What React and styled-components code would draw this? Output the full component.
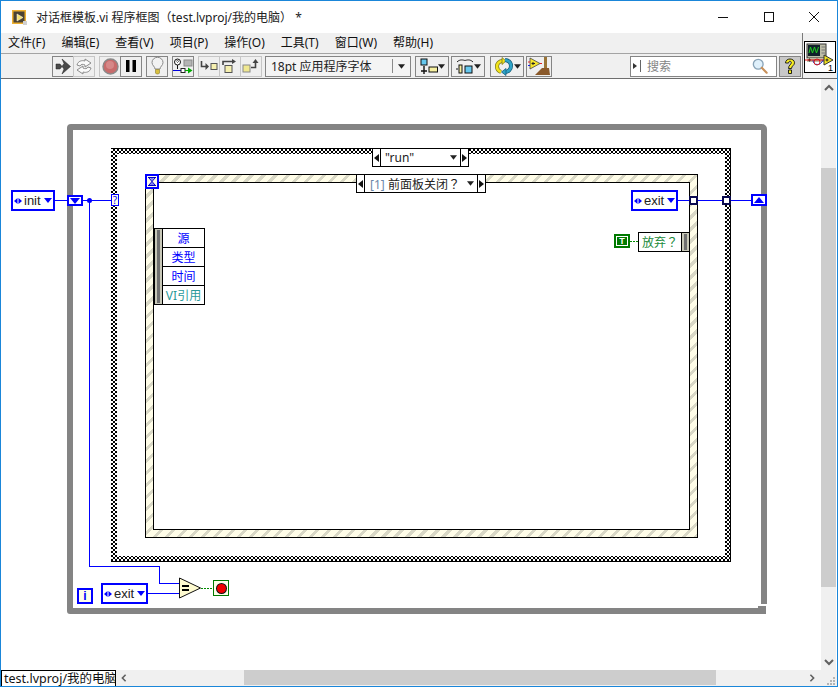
import React from "react";
import styled, { createGlobalStyle, css } from "styled-components";

const UI_FONT = `"Noto Sans", "Noto Sans CJK SC", sans-serif`;
const BLUE = "#0000ff";
const GREEN = "#007a00";

// diagram nodes sit on a free canvas, coordinates are the ones of the window
const place = (x, y, w, h) => css`
  position: absolute;
  left: ${x - 1}px;
  top: ${y - 79}px;
  width: ${w}px;
  height: ${h}px;
  box-sizing: border-box;
`;

const Global = createGlobalStyle`
  html, body { margin: 0; padding: 0; background: #fff; }
  body { font-family: ${UI_FONT}; overflow: hidden; }
`;

const AppWindow = styled.div`
  width: 838px;
  height: 687px;
  box-sizing: border-box;
  border: 1px solid #1a86d9;
  display: flex;
  flex-direction: column;
  background: #fff;
`;

const TitleBar = styled.div`
  height: 32px;
  flex: none;
  display: flex;
  align-items: center;
  padding-left: 11px;
`;

const TitleText = styled.div`
  margin-left: 9px;
  font-size: 12px;
  color: #222;
  flex: 1;
  white-space: pre;
`;

const WinButtons = styled.div`
  display: flex;
`;

const WinButton = styled.div`
  width: 45.5px;
  height: 32px;
  display: flex;
  align-items: center;
  justify-content: center;
`;

const Header = styled.div`
  display: flex;
  height: 45px;
  flex: none;
  background: #f0f0f0;
  border-bottom: 1px solid #6e6e6e;
`;

const HeaderMain = styled.div`
  flex: 1;
  display: flex;
  flex-direction: column;
`;

const MenuBar = styled.div`
  height: 17px;
  padding: 0 0 3px 7px;
  display: flex;
  align-items: center;
  gap: 16px;
  font-size: 12px;
  color: #111;
  border-bottom: 1px solid #a4a4a4;
`;

const MenuItem = styled.span`
  white-space: nowrap;
`;

const Toolbar = styled.div`
  flex: 1;
  display: flex;
  align-items: center;
  padding-left: 51px;
  padding-right: 1px;
`;

const ToolGroup = styled.div`
  display: flex;
  flex: none;
  margin-right: ${(p) => p.$gap ?? 4}px;
`;

const ToolButton = styled.div`
  width: ${(p) => p.$w ?? 22}px;
  height: 21px;
  flex: none;
  box-sizing: border-box;
  border: 1.5px solid ${(p) => (p.$soft ? "#c6c6c6" : "#858585")};
  background: #efefef;
  display: flex;
  align-items: center;
  justify-content: center;
  margin-left: ${(p) => (p.$join ? -1 : 0)}px;
`;

const FontPicker = styled.div`
  width: 146px;
  height: 21px;
  flex: none;
  box-sizing: border-box;
  border: 1.5px solid #858585;
  background: #f4f4f4;
  display: flex;
  align-items: center;
  font-size: 12px;
  color: #222;
  padding-left: 5px;
  margin-right: 4px;
`;

const FontName = styled.span`
  flex: 1;
  white-space: pre;
`;

const FontArrow = styled.span`
  width: 17px;
  height: 14px;
  border-left: 1px solid #8a8a8a;
  display: flex;
  align-items: center;
  justify-content: center;
`;

const Search = styled.div`
  width: 147px;
  height: 21px;
  box-sizing: border-box;
  border: 1.5px solid #858585;
  background: #fff;
  margin-left: auto;
  margin-right: 2px;
  padding-right: 8px;
  display: flex;
  align-items: center;
  font-size: 12px;
  color: #858585;
`;

const SearchMark = styled.span`
  width: 7px;
  height: 12px;
  margin-left: 2px;
  margin-right: 6px;
  border-right: 1px solid #666;
  display: flex;
  align-items: center;
`;

const SearchLabel = styled.span`
  flex: 1;
`;

const HelpButton = styled.div`
  width: 22px;
  height: 21px;
  box-sizing: border-box;
  border: 1.5px solid #858585;
  background: #c8c8c8;
  display: flex;
  align-items: center;
  justify-content: center;
`;

const IconPane = styled.div`
  width: 35px;
  border-left: 1px solid #7a7a7a;
  display: flex;
  align-items: center;
  justify-content: center;
  box-sizing: border-box;
`;

const ViIcon = styled.div`
  width: 32px;
  height: 32px;
  box-sizing: border-box;
  border: 1px solid #000;
  background: #fff;
  margin-top: 2px;
`;

const Body = styled.div`
  flex: 1;
  display: flex;
  min-height: 0;
`;

const Diagram = styled.div`
  flex: 1;
  position: relative;
  overflow: hidden;
  background: #fff;
`;

const VScroll = styled.div`
  width: 15px;
  margin-right: 1px;
  background: #f0f0f0;
  display: flex;
  flex-direction: column;
  align-items: center;
`;

const VThumb = styled.div`
  width: 15px;
  height: 419px;
  margin-top: 72px;
  flex: none;
  background: #cdcdcd;
`;

const ScrollArrow = styled.div`
  display: flex;
  align-items: center;
  justify-content: center;
  height: 17px;
  flex: none;
`;

const VDown = styled(ScrollArrow)`
  margin-top: auto;
`;

const BottomRow = styled.div`
  height: 16px;
  flex: none;
  display: flex;
  background: #f0f0f0;
`;

const PathLabel = styled.div`
  width: 115px;
  box-sizing: border-box;
  border: 1px solid #000;
  border-bottom: none;
  background: #fff;
  font-size: 12.5px;
  line-height: 15px;
  color: #111;
  padding-left: 2px;
  white-space: nowrap;
  overflow: hidden;
`;

const HScroll = styled.div`
  flex: 1;
  display: flex;
  align-items: center;
`;

const HThumb = styled.div`
  width: 472px;
  height: 15px;
  margin-left: 116px;
  background: #cdcdcd;
  align-self: flex-start;
`;

const HArrowLeft = styled.div`
  margin-left: 4px;
  width: 8px;
  display: flex;
`;

const HArrowRight = styled.div`
  margin-left: 92px;
  width: 8px;
  display: flex;
`;

const Grip = styled.div`
  margin-left: auto;
  margin-right: 1px;
  width: 15px;
  height: 15px;
  display: flex;
  align-items: flex-end;
  justify-content: flex-end;
`;

/* diagram parts */

const WhileLoop = styled.div`
  ${place(67, 124, 700, 490)}
  border: 6px solid #848484;
  border-radius: 4px 5px 0 3px;
`;

const LoopKnot = styled.div`
  ${place(758, 604, 10, 11)}
  background: #fff;
  &::after {
    content: "";
    position: absolute;
    left: 0;
    top: 2px;
    width: 8px;
    height: 8px;
    background: #848484;
  }
`;

const CaseStructure = styled.div`
  ${place(111, 148, 620, 414)}
  border: 1px solid #000;
  border-left: none;
  padding: 5px 5px 5px 6px;
  background: conic-gradient(#000 25%, #fff 0 50%, #000 0 75%, #fff 0) 0 0 / 4px 4px;
`;

const CaseInner = styled.div`
  height: 100%;
  background: #fff;
`;

const EventStructure = styled.div`
  ${place(145, 174, 553, 364)}
  border: 1px solid #000;
  padding: 7px;
  background: repeating-linear-gradient(
    135deg,
    #fffde8 0 5.5px,
    #d9d8c6 5.5px 8.5px
  );
`;

const EventInner = styled.div`
  height: 100%;
  box-sizing: border-box;
  background: #fff;
  border: 1px solid #000;
`;

const Wires = styled.svg`
  position: absolute;
  left: -1px;
  top: -79px;
  width: 838px;
  height: 687px;
  pointer-events: none;
`;

const SelectorBox = styled.div`
  ${(p) => place(p.$x, p.$y, p.$w, 19)}
  border: 1px solid #000;
  background: #fff;
  display: flex;
  align-items: center;
  font-size: 12px;
  color: #222;
  white-space: pre;
`;

const SelectorStep = styled.span`
  width: 7px;
  height: 100%;
  flex: none;
  background: #fff;
  border-${(p) => (p.$right ? "left" : "right")}: 1px solid #000;
  display: flex;
  align-items: center;
  justify-content: center;
`;

const SelectorText = styled.span`
  flex: 1;
  padding-left: ${(p) => p.$pad}px;
`;

const SelectorIndex = styled.span`
  color: #6c87a8;
`;

const SelectorDrop = styled.span`
  display: flex;
  margin-right: 3px;
`;

// the question mark sits in the middle of its cell in the reference
const WidePunct = styled.span`
  font-family: "Noto Sans CJK TC", sans-serif;
`;

const EnumBox = styled.div`
  ${(p) => place(p.$x, p.$y, p.$w, p.$h)}
  border: 2px solid ${BLUE};
  outline: 0.5px solid ${BLUE};
  outline-offset: -1px;
  background: #fff;
  display: flex;
  align-items: center;
  padding: 0 1px 0 1px;
  font-family: "Liberation Sans", sans-serif;
  font-size: 13px;
  color: #222;
  svg {
    flex: none;
  }
`;

const EnumLabel = styled.span`
  flex: 1;
  margin-left: 2px;
  line-height: 14px;
`;

const ShiftRegister = styled.div`
  ${(p) => place(p.$x, p.$y, 16, p.$h)}
  border: 2px solid ${BLUE};
  background: #fff;
  display: flex;
  align-items: center;
  justify-content: center;
`;

const SelectorTerminal = styled.div`
  ${place(111, 194, 8, 12)}
  border: 1px solid ${BLUE};
  background: #fffde8;
  color: ${BLUE};
  font-size: 10px;
  line-height: 10px;
  text-align: center;
`;

const Hourglass = styled.div`
  ${place(145, 174, 14, 15)}
  border: 2px solid ${BLUE};
  background: #fffde8;
  display: flex;
  align-items: center;
  justify-content: center;
`;

const Tunnel = styled.div`
  ${(p) => place(p.$x, 196, 9, 9)}
  border: 2px solid #0a0a50;
  background: #fff;
`;

const Unbundle = styled.div`
  ${place(154, 228, 51, 77)}
  border: 1px solid #000;
  display: flex;
  background: #fff;
`;

const Handle = styled.div`
  width: 7px;
  flex: none;
  background: #c8c8b8;
  display: flex;
  justify-content: center;
  padding: 1px 0;
  box-sizing: border-box;
  &::after {
    content: "";
    width: 3px;
    background: #707070;
  }
`;

const UnbundleRows = styled.div`
  flex: 1;
  display: flex;
  flex-direction: column;
  border-left: 1px solid #000;
`;

const UnbundleRow = styled.div`
  flex: 1;
  display: flex;
  align-items: center;
  justify-content: center;
  font-size: 12px;
  color: ${(p) => p.$color ?? BLUE};
  & + & {
    border-top: 1px solid #000;
  }
`;

const TrueConst = styled.div`
  ${place(614, 234, 16, 14)}
  background: ${GREEN};
  padding: 2px;
  display: flex;
`;

const TrueFace = styled.div`
  flex: 1;
  border: 1px solid #fff;
  color: #fff;
  font-family: "Liberation Sans", sans-serif;
  font-weight: 700;
  font-size: 9px;
  line-height: 8px;
  text-align: center;
`;

const Bundle = styled.div`
  ${place(638, 232, 52, 20)}
  border: 1px solid #000;
  background: #fff;
  display: flex;
  align-items: center;
  font-size: 12px;
  color: #1a8a3a;
`;

const BundleText = styled.span`
  flex: 1;
  padding-left: 3px;
`;

const BundleHandle = styled(Handle)`
  align-self: stretch;
  border-left: 1px solid #000;
  box-sizing: content-box;
`;

const StopTerminal = styled.div`
  ${place(213, 580, 16, 16)}
  border: 1px solid ${GREEN};
  background: #fffde8;
  display: flex;
  align-items: center;
  justify-content: center;
`;

const StopLight = styled.div`
  width: 9px;
  height: 9px;
  border-radius: 50%;
  background: #f00000;
  box-shadow: 0 0 0 1px #111;
`;

const Iteration = styled.div`
  ${place(77, 588, 16, 16)}
  border: 2px solid ${BLUE};
  background: #fffde8;
  color: ${BLUE};
  font-family: "Liberation Sans", sans-serif;
  font-weight: 700;
  font-size: 12px;
  line-height: 12px;
  text-align: center;
`;

const DropArrow = ({ color = "#222", w = 8 }) => (
  <svg width={w} height="5" viewBox="0 0 8 5">
    <path d="M0 0H8L4 5Z" fill={color} />
  </svg>
);

const StepArrow = ({ right }) => (
  <svg width="5" height="8" viewBox="0 0 5 8">
    <path d={right ? "M0 0L5 4L0 8Z" : "M5 0L0 4L5 8Z"} fill="#111" />
  </svg>
);

const EnumConstant = ({ x, y, w, h, label }) => (
  <EnumBox $x={x} $y={y} $w={w} $h={h}>
    <svg width="8" height="6" viewBox="0 0 8 6">
      <path d="M3.500 0V6L0 3ZM4.500 0V6L8 3Z" fill={BLUE} />
    </svg>
    <EnumLabel>{label}</EnumLabel>
    <DropArrow color={BLUE} />
  </EnumBox>
);

const Selector = ({ x, y, w, pad, children }) => (
  <SelectorBox $x={x} $y={y} $w={w}>
    <SelectorStep>
      <StepArrow />
    </SelectorStep>
    <SelectorText $pad={pad}>{children}</SelectorText>
    <SelectorDrop>
      <DropArrow w={7} />
    </SelectorDrop>
    <SelectorStep $right>
      <StepArrow right />
    </SelectorStep>
  </SelectorBox>
);

const LabviewLogo = () => (
  <svg width="15" height="15" viewBox="0 0 15 15">
    <rect width="14" height="14" fill="#eeb030" />
    <rect x="1.500" y="1.500" width="11" height="11" fill="#4a4234" />
    <path d="M5 4L11 7.500L5 11Z" fill="#f4e070" stroke="#fff" strokeWidth=".5" />
    <rect x="11" y="11" width="4" height="4" fill="#d0d0d0" />
  </svg>
);

const RunIcon = () => (
  <svg width="16" height="17" viewBox="0 0 16 17">
    <path d="M1 6H5L7 8.500L5 11H1Z" fill="#4a4a4a" stroke="#222" strokeWidth=".5" />
    <path d="M7 1L15.500 8.500L7 16L9 11L7 8.500L9 5.500Z" fill="#4a4a4a" stroke="#222" strokeWidth=".5" />
  </svg>
);

const RunLoopIcon = () => (
  <svg width="18" height="17" viewBox="0 0 18 17">
    <path
      d="M2 7C3 3 7 2 10 3V1L16 5L10 9V7C8 6 6 6 5 8ZM16 10C15 14 11 15 8 14V16L2 12L8 8V10C10 11 12 11 13 9Z"
      fill="#fafafa"
      stroke="#8c8c8c"
    />
  </svg>
);

const AbortIcon = () => (
  <svg width="17" height="17" viewBox="0 0 17 17">
    <circle cx="8.500" cy="8.500" r="7.500" fill="#c86c6c" stroke="#8a8a8a" strokeWidth="1.400" />
    <circle cx="8" cy="7" r="4" fill="#d68888" />
  </svg>
);

const PauseIcon = () => (
  <svg width="12" height="12" viewBox="0 0 12 12">
    <path d="M1 0H4.500V12H1ZM7.500 0H11V12H7.500Z" fill="#000" />
  </svg>
);

const BulbIcon = () => (
  <svg width="13" height="18" viewBox="0 0 13 18">
    <path
      d="M4 12C4 9.500 1 8.500 1 5.500A5.500 5.200 0 0 1 12 5.500C12 8.500 9 9.500 9 12Z"
      fill="#f2f2f2"
      stroke="#8a8a8a"
    />
    <path d="M4.500 12.500H8.500V16L7.500 17H5.500L4.500 16Z" fill="#d8c040" stroke="#8a7a30" strokeWidth=".6" />
  </svg>
);

const ProbeIcon = () => (
  <svg width="20" height="17" viewBox="0 0 20 17">
    <circle cx="4.500" cy="4" r="3" fill="#fff" stroke="#111" />
    <path d="M3.500 3.500C3.500 2 5.500 2 5.500 3.500L4.500 4.500V5" stroke="#111" strokeWidth=".7" fill="none" />
    <path d="M4.500 7V11" stroke="#111" />
    <rect x="11" y="2" width="8" height="6" fill="#b4b4b4" stroke="#8a8a8a" />
    <path d="M0 12.500H8" stroke="#0000e0" />
    <rect x="8" y="10.500" width="4" height="4" fill="#fff" stroke="#222" />
    <path d="M12 12.500H15" stroke="#0a0" />
    <path d="M15 9.500L19.500 12.500L15 15.500Z" fill="#0a0" />
  </svg>
);

const StepInIcon = () => (
  <svg width="18" height="13" viewBox="0 0 18 13">
    <path d="M1.500 1V6.500H7" stroke="#444" strokeWidth="1.600" fill="none" />
    <path d="M5.500 3L9 6.500L5.500 10Z" fill="#444" />
    <rect x="11" y="3.500" width="6" height="6" fill="#f6f0b0" stroke="#555" />
  </svg>
);

const StepOverIcon = () => (
  <svg width="18" height="15" viewBox="0 0 18 15">
    <path d="M2 6V2.500H12" stroke="#444" strokeWidth="1.600" fill="none" />
    <path d="M11 0L15 2.500L11 5Z" fill="#444" />
    <rect x="4" y="6.500" width="7" height="7" fill="#f6f0b0" stroke="#555" />
  </svg>
);

const StepOutIcon = () => (
  <svg width="18" height="14" viewBox="0 0 18 14">
    <rect x="1" y="6" width="7" height="7" fill="#f0e890" stroke="#888" />
    <path d="M9 8.500H13.500V3" stroke="#444" strokeWidth="1.600" fill="none" />
    <path d="M10.500 4L13.500 0L16.500 4Z" fill="#444" />
  </svg>
);

const AlignIcon = () => (
  <svg width="18" height="17" viewBox="0 0 18 17">
    <rect x="1" y="1" width="6" height="6" fill="#66c8ee" stroke="#111" />
    <path d="M4 8V16M1 13H7" stroke="#111" strokeWidth="1.400" />
    <rect x="9" y="9" width="8.500" height="5" fill="#f6f0a0" stroke="#111" />
  </svg>
);

const DistributeIcon = () => (
  <svg width="18" height="16" viewBox="0 0 18 16">
    <path d="M1 4C4 1 7 2 9 2.500C11 2 14 1 17 4" stroke="#222" fill="none" />
    <rect x="3" y="7" width="3" height="8" fill="#f6f0a0" stroke="#111" />
    <rect x="9" y="8" width="7" height="7" fill="#66c8ee" stroke="#111" />
    <path d="M0 11H2" stroke="#111" />
  </svg>
);

const ReorderIcon = () => (
  <svg width="20" height="19" viewBox="0 0 20 19">
    <path d="M9 4C5 4 3 6.500 3 9.500C3 12 4.500 14 7 15" stroke="#7d7a18" strokeWidth="4" fill="none" />
    <path d="M9 4C5 4 3 6.500 3 9.500C3 12 4.500 14 7 15" stroke="#f2e31c" strokeWidth="2.600" fill="none" />
    <path d="M8 0.500V7.500L12 4Z" fill="#f2e31c" stroke="#7d7a18" strokeWidth=".8" />
    <path d="M11 3C15 3.500 17 6 17 9C17 12 14.500 15 11 15" stroke="#145c78" strokeWidth="4" fill="none" />
    <path d="M11 3C15 3.500 17 6 17 9C17 12 14.500 15 11 15" stroke="#2ea4c8" strokeWidth="2.600" fill="none" />
    <path d="M12 11.500V18.500L7.500 15Z" fill="#2ea4c8" stroke="#145c78" strokeWidth=".8" />
  </svg>
);

const CleanupIcon = () => (
  <svg width="22" height="19" viewBox="0 0 22 19">
    <path d="M2 1L12 6.500L2 12Z" fill="#f6e62c" stroke="#444" strokeWidth=".8" />
    <path d="M3.500 6.500H7M5 5V8" stroke="#222" />
    <path d="M0 5H2" stroke="#e02020" />
    <path d="M0 8.500H2" stroke="#2020e0" />
    <path d="M12 6.500H14" stroke="#e02020" />
    <rect x="16" y="0" width="3" height="11" fill="#9a7436" />
    <path d="M14 11H21L22 18H7Z" fill="#8a5a2c" />
  </svg>
);

const SearchGlass = () => (
  <svg width="16" height="16" viewBox="0 0 18 18">
    <circle cx="7" cy="7" r="5.500" fill="#dff0fb" stroke="#8aa4b8" strokeWidth="1.500" />
    <path d="M11 11L16.500 16.500" stroke="#c8905a" strokeWidth="2.400" strokeLinecap="round" />
  </svg>
);

const HelpMark = () => (
  <svg width="12" height="17" viewBox="0 0 12 17">
    <path
      d="M1.500 5C1.500 2.500 3.500 1 6 1C8.500 1 10.500 2.500 10.500 4.800C10.500 7.500 7.500 7.800 7.500 10.500H4.500C4.500 7 7.300 6.500 7.300 4.800C7.300 3.700 6.800 3.300 6 3.300C5 3.300 4.600 4 4.600 5ZM4.500 12H7.500V15.500H4.500Z"
      fill="#f8ee20"
      stroke="#111"
      strokeWidth=".9"
    />
  </svg>
);

const ViGlyph = () => (
  <svg width="30" height="30" viewBox="0 0 30 30">
    <rect x="2" y="2" width="19" height="14" fill="#bdbda8" stroke="#333" />
    <rect x="3" y="3" width="12" height="11" fill="#10202a" />
    <path d="M4 11L5.500 5L7.500 11L9.500 5L11.500 11L13.500 5" stroke="#20d020" fill="none" />
    <path d="M16.500 5H20M16.500 8H20M16.500 11H20" stroke="#777" />
    <rect x="2" y="16" width="19" height="4" fill="#bdbda8" />
    <path d="M3 18H6M4.500 16.500V19.500" stroke="#222" />
    <path d="M8 18C8 24 16 24 18 18" stroke="#2030d0" fill="none" />
    <circle cx="12" cy="20" r="3" stroke="#d02020" fill="none" />
    <path d="M0 18H19" stroke="#e01010" />
    <path d="M19 13L28 18L19 23Z" fill="#f6e620" stroke="#333" />
    <path d="M20.500 18H23.500M22 16.500V19.500" stroke="#222" />
    <text x="23" y="29" fontSize="9" fontFamily="Liberation Sans" fill="#000">1</text>
  </svg>
);

const Chevron = ({ dir }) => {
  const paths = {
    up: "M1 7L5 3L9 7",
    down: "M1 3L5 7L9 3",
    left: "M7 1L3 5L7 9",
    right: "M3 1L7 5L3 9",
  };
  return (
    <svg width="10" height="10" viewBox="0 0 10 10">
      <path d={paths[dir]} stroke="#606060" strokeWidth="2" fill="none" />
    </svg>
  );
};

const WireLayer = () => (
  <Wires viewBox="0 0 838 687" shapeRendering="crispEdges">
    <g stroke={BLUE} strokeWidth="1" fill="none">
      <path d="M54 200.500H111" />
      <path d="M89.500 200.500V566.500H159.500V583.500H179" />
      <path d="M147 593.500H179" />
      <path d="M678 200.500H751" />
    </g>
    <circle cx="89.500" cy="200.500" r="2.500" fill={BLUE} shapeRendering="auto" />
    <g stroke="#008a00" strokeWidth="1" strokeDasharray="2 1" fill="none">
      <path d="M201 588.500H213" />
      <path d="M630 241.500H638" />
    </g>
    <path d="M179.500 578V598L200.500 588Z" fill="#fffbd0" stroke="#111" shapeRendering="auto" />
    <path d="M182 585H189V587H182ZM182 589H189V591H182Z" fill="#000" />
  </Wires>
);

const menus = ["文件(F)", "编辑(E)", "查看(V)", "项目(P)", "操作(O)", "工具(T)", "窗口(W)", "帮助(H)"];
const fields = [
  { label: "源" },
  { label: "类型" },
  { label: "时间" },
  { label: "VI引用", color: "#2a9a9a" },
];

const App = () => (
  <AppWindow>
    <Global />
    <TitleBar>
      <LabviewLogo />
      <TitleText>对话框模板.vi 程序框图（test.lvproj/我的电脑） *</TitleText>
      <WinButtons>
        <WinButton>
          <svg width="10" height="10" viewBox="0 0 10 10">
            <path d="M0 5.500H10" stroke="#111" />
          </svg>
        </WinButton>
        <WinButton>
          <svg width="10" height="10" viewBox="0 0 10 10">
            <rect x=".5" y=".5" width="9" height="9" fill="none" stroke="#111" />
          </svg>
        </WinButton>
        <WinButton>
          <svg width="10" height="10" viewBox="0 0 10 10">
            <path d="M0 0L10 10M10 0L0 10" stroke="#111" />
          </svg>
        </WinButton>
      </WinButtons>
    </TitleBar>
    <Header>
      <HeaderMain>
        <MenuBar>
          {menus.map((m) => (
            <MenuItem key={m}>{m}</MenuItem>
          ))}
        </MenuBar>
        <Toolbar>
          <ToolGroup>
            <ToolButton><RunIcon /></ToolButton>
            <ToolButton $soft $join><RunLoopIcon /></ToolButton>
          </ToolGroup>
          <ToolGroup>
            <ToolButton $soft><AbortIcon /></ToolButton>
            <ToolButton $join><PauseIcon /></ToolButton>
          </ToolGroup>
          <ToolGroup>
            <ToolButton><BulbIcon /></ToolButton>
          </ToolGroup>
          <ToolGroup>
            <ToolButton><ProbeIcon /></ToolButton>
          </ToolGroup>
          <ToolGroup $gap={3}>
            <ToolButton $soft><StepInIcon /></ToolButton>
            <ToolButton $soft $join><StepOverIcon /></ToolButton>
            <ToolButton $soft $join><StepOutIcon /></ToolButton>
          </ToolGroup>
          <FontPicker>
            <FontName>18pt 应用程序字体</FontName>
            <FontArrow><DropArrow w={7} /></FontArrow>
          </FontPicker>
          <ToolGroup $gap={2}>
            <ToolButton $w={34}><AlignIcon /><DropArrow w={7} /></ToolButton>
          </ToolGroup>
          <ToolGroup $gap={5}>
            <ToolButton $w={34}><DistributeIcon /><DropArrow w={7} /></ToolButton>
          </ToolGroup>
          <ToolGroup $gap={2}>
            <ToolButton $w={34}><ReorderIcon /><DropArrow w={7} /></ToolButton>
          </ToolGroup>
          <ToolButton $w={26}><CleanupIcon /></ToolButton>
          <Search>
            <SearchMark>
              <svg width="4" height="6" viewBox="0 0 4 6">
                <path d="M0 0L4 3L0 6Z" fill="#333" />
              </svg>
            </SearchMark>
            <SearchLabel>搜索</SearchLabel>
            <SearchGlass />
          </Search>
          <HelpButton><HelpMark /></HelpButton>
        </Toolbar>
      </HeaderMain>
      <IconPane>
        <ViIcon><ViGlyph /></ViIcon>
      </IconPane>
    </Header>
    <Body>
      <Diagram>
        <WhileLoop />
        <LoopKnot />
        <CaseStructure>
          <CaseInner />
        </CaseStructure>
        <EventStructure>
          <EventInner />
        </EventStructure>
        <WireLayer />
        <Selector x={372} y={148} w={97} pad={4}>"run"</Selector>
        <Selector x={356} y={174} w={130} pad={5}>
          <SelectorIndex>[1]</SelectorIndex> 前面板关闭<WidePunct>？</WidePunct>
        </Selector>
        <EnumConstant x={11} y={190} w={44} h={21} label="init" />
        <EnumConstant x={631} y={190} w={47} h={21} label="exit" />
        <EnumConstant x={101} y={583} w={47} h={21} label="exit" />
        <ShiftRegister $x={67} $y={195} $h={11}>
          <svg width="10" height="6" viewBox="0 0 10 6">
            <path d="M0 0H10L5 6Z" fill={BLUE} />
          </svg>
        </ShiftRegister>
        <ShiftRegister $x={751} $y={194} $h={12}>
          <svg width="10" height="6" viewBox="0 0 10 6">
            <path d="M0 6H10L5 0Z" fill={BLUE} />
          </svg>
        </ShiftRegister>
        <SelectorTerminal>?</SelectorTerminal>
        <Hourglass>
          <svg width="8" height="9" viewBox="0 0 8 9">
            <path d="M0 .5H8M0 8.500H8M1 1L7 8M7 1L1 8" stroke="#0000c0" />
            <path d="M2 1H6L4 4ZM4 5L6.500 8H1.500Z" fill="#0000ff" opacity=".5" />
          </svg>
        </Hourglass>
        <Tunnel $x={689} />
        <Tunnel $x={722} />
        <Unbundle>
          <Handle />
          <UnbundleRows>
            {fields.map((f) => (
              <UnbundleRow key={f.label} $color={f.color}>{f.label}</UnbundleRow>
            ))}
          </UnbundleRows>
        </Unbundle>
        <TrueConst>
          <TrueFace>T</TrueFace>
        </TrueConst>
        <Bundle>
          <BundleText>放弃<WidePunct>？</WidePunct></BundleText>
          <BundleHandle />
        </Bundle>
        <Iteration>i</Iteration>
        <StopTerminal>
          <StopLight />
        </StopTerminal>
      </Diagram>
      <VScroll>
        <ScrollArrow><Chevron dir="up" /></ScrollArrow>
        <VThumb />
        <VDown><Chevron dir="down" /></VDown>
      </VScroll>
    </Body>
    <BottomRow>
      <PathLabel>test.lvproj/我的电脑</PathLabel>
      <HScroll>
        <HArrowLeft><Chevron dir="left" /></HArrowLeft>
        <HThumb />
        <HArrowRight><Chevron dir="right" /></HArrowRight>
        <Grip>
          <svg width="9" height="9" viewBox="0 0 9 9">
            <path d="M6 0H8V2H6ZM3 3H5V5H3ZM6 3H8V5H6ZM0 6H2V8H0ZM3 6H5V8H3ZM6 6H8V8H6Z" fill="#b4b4b4" />
          </svg>
        </Grip>
      </HScroll>
    </BottomRow>
  </AppWindow>
);

export default App;
